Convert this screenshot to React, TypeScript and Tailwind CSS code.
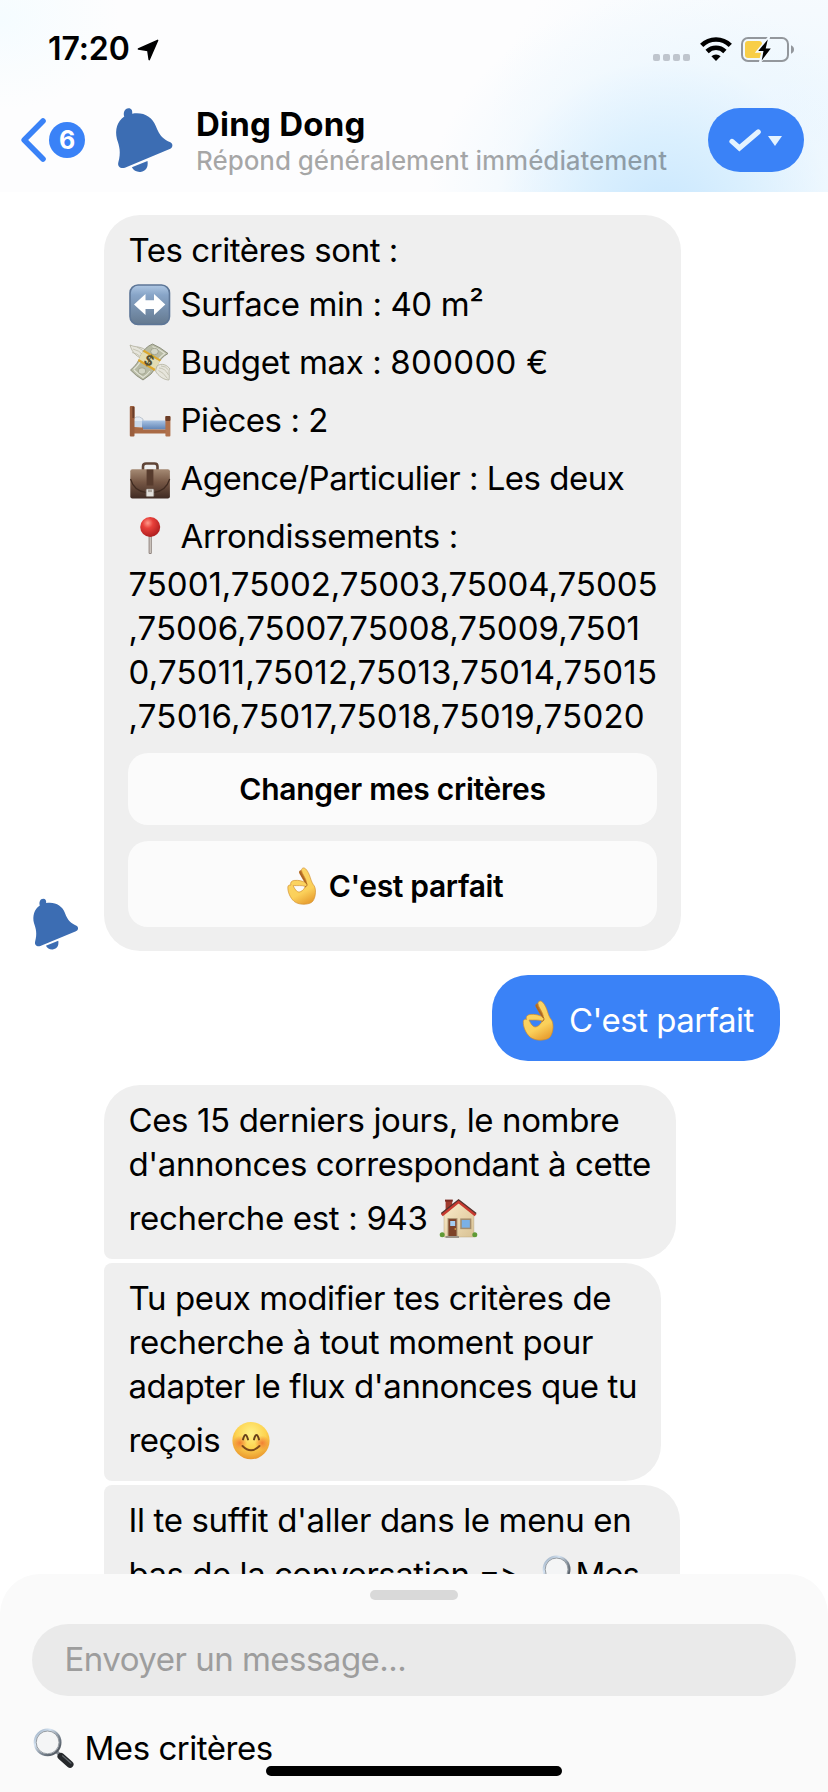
import type { ReactNode } from "react";

function Bell({ className }: { className: string }) {
  return (
    <svg viewBox="340 320 185 205" className={className} fill="#3c6db3">
      <path d="M373 352C369 341 374 327 386 327C395 327 398 334 397 343C430 337 458 352 468 380C480 412 492 420 512 429C521 434 520 446 510 450L375 506C362 510 352 502 355 490C364 460 358 440 351 420C344 392 352 366 373 352Z" />
      <path d="M396 505L443 486C446 505 438 517 422 519C410 520 401 514 396 505Z" />
    </svg>
  );
}

function ArrowsEmoji() {
  return (
    <svg viewBox="0 0 42 42" className="size-[42px]">
      <defs>
        <linearGradient id="ar" x1="0" y1="0" x2="0" y2="1">
          <stop offset="0" stopColor="#afc8e4" />
          <stop offset=".25" stopColor="#88a5c8" />
          <stop offset="1" stopColor="#64798f" />
        </linearGradient>
      </defs>
      <rect x="1" y="1" width="39.5" height="39.5" rx="8" fill="url(#ar)" stroke="#5d7697" strokeWidth="1.6" />
      <path d="M5 20.5L16.5 10V16.2H25V10L36.3 20.5L25 31V25H16.5V31Z" fill="#fff" />
    </svg>
  );
}

function MoneyEmoji() {
  return (
    <svg viewBox="0 0 42 42" className="size-[42px]">
      <path d="M15 17C9 16 3 11 1 3C5 5 9 4.500 13 6C17 7.500 19 10 19 13Z" fill="#e6e5dc" stroke="#a9a893" strokeWidth=".7" />
      <path d="M4 7Q10 8 15 14M3 10.500Q8 11 13 16M8 5Q14 7 17 13" fill="none" stroke="#b7b6a2" strokeWidth=".7" />
      <path d="M1.500 28Q9 22 12 13Q16 5 23.500 2Q31 5 39 11.500Q31 16 28 24Q23 33 14 38Q7 34 1.500 28Z" fill="#b7baa4" stroke="#7f826e" strokeWidth=".8" />
      <path d="M4.500 27.500Q11 22 14 14M23.500 4.500Q30 7 35.800 11.500Q29 16 26 23M5 28Q9 32 14 35.500Q18 33 21 29" fill="none" stroke="#e2e3d6" strokeWidth="1.100" />
      <ellipse cx="25.500" cy="9.500" rx="3.800" ry="3.200" fill="#d3d5c5" stroke="#8b8f78" strokeWidth=".6" />
      <ellipse cx="13" cy="29" rx="3.800" ry="3.200" fill="#d3d5c5" stroke="#8b8f78" strokeWidth=".6" />
      <path d="M13.500 9.500L31 19.500L26.500 27.500L9.500 17.500Z" fill="#e3dcb2" />
      <path d="M14.500 8.600L31.500 18.600M9.300 18L26 28" stroke="#dfa92c" strokeWidth="2.200" />
      <text x="20" y="23.500" textAnchor="middle" fontSize="14" fontWeight="700" fill="#57502e" transform="rotate(25 20 18.500)">$</text>
      <path d="M28 24C33 20.500 38 23 41 27C39 29 41 32 40 38C35 38 29 34 26.500 29Z" fill="#e6e5dc" stroke="#a9a893" strokeWidth=".7" />
      <path d="M30 26Q36 26 39.500 33M29.500 28.500Q34 30 38.500 36.500M32 24Q37 24 39.500 28" fill="none" stroke="#b7b6a2" strokeWidth=".7" />
    </svg>
  );
}

function OkHandEmoji({ className }: { className: string }) {
  return (
    <svg viewBox="0 0 42 42" className={`shrink-0 ${className}`}>
      <defs>
        <linearGradient id="ok" x1=".2" y1="0" x2=".6" y2="1">
          <stop offset="0" stopColor="#fbd66a" />
          <stop offset=".7" stopColor="#fbd05a" />
          <stop offset="1" stopColor="#e9a233" />
        </linearGradient>
      </defs>
      <path d="M21 3.500C19 3 17.500 5 19 7.500L25 18L30 17L25 6Z" fill="#b9702a" />
      <path
        fillRule="evenodd"
        d="M23.300 1C26 1 29 6.500 30.500 11.500C31.600 15.200 32.800 18 34.800 20.500C37.300 25 36 35 32 38C27 41.200 17.500 40.800 13 37C9 33.500 6 27 6.300 21.500C6.500 19.600 8 19 9.600 19.500C8.600 17 10 14.900 13 14.500C18 13.900 22.500 15 26.500 17.500C26.500 12.500 21 7 21 3.500C21 2 22 1 23.300 1ZM12 20C14.500 25.500 17 28 20 26.500C22.500 25.500 24.500 23 25 20.800C21 19.500 16.500 20.300 12 20Z"
        fill="url(#ok)"
        stroke="#d08d2c"
        strokeWidth=".7"
      />
      <path d="M19.300 5.500C20 9 24 12.500 26 17.500M26.500 17.500C27.500 19 27 21 25 21.500" fill="none" stroke="#a8641f" strokeWidth="1" strokeLinecap="round" />
    </svg>
  );
}

function BedEmoji() {
  return (
    <svg viewBox="0 0 42 42" className="size-[42px]">
      <defs>
        <linearGradient id="bd" x1="0" y1="0" x2="0" y2="1">
          <stop offset="0" stopColor="#a9c3e3" />
          <stop offset="1" stopColor="#5f83b5" />
        </linearGradient>
      </defs>
      <path d="M4 20L7 17Q11 16 14 19L14 22L4 23Z" fill="#e4ebf3" stroke="#a3adb9" strokeWidth=".6" />
      <rect x="4" y="21" width="10" height="6" fill="#c9d8ea" />
      <rect x="13" y="20.5" width="24" height="9" fill="url(#bd)" />
      <path d="M5 27L14 27.5V29.5H37V33.5H5Z" fill="#a96a45" />
      <rect x=".8" y="6" width="4.7" height="30.5" rx="1" fill="#9b5e3d" />
      <rect x="3.4" y="7" width="2" height="11" fill="#6b3d28" />
      <rect x="36.4" y="16" width="5" height="20.5" rx="1" fill="#b0714c" />
      <rect x="36.4" y="16" width="5" height="5" rx="1" fill="#6b3d28" />
    </svg>
  );
}

function BriefcaseEmoji() {
  return (
    <svg viewBox="0 0 42 42" className="size-[42px]">
      <defs>
        <linearGradient id="bc" x1="0" y1="0" x2="0" y2="1">
          <stop offset="0" stopColor="#a58a74" />
          <stop offset=".45" stopColor="#755644" />
          <stop offset="1" stopColor="#3f2a23" />
        </linearGradient>
      </defs>
      <path d="M14 12V8.5Q14 5.5 17 5.5H25.5Q28.5 5.5 28.5 8.5V12" fill="none" stroke="#5f4436" strokeWidth="2.6" />
      <rect x="1.3" y="11.2" width="39.6" height="29.2" rx="2" fill="url(#bc)" />
      <path d="M1.5 21Q5 33 17 34.5H25Q37 33 40.7 21" fill="none" stroke="#3f2a20" strokeWidth="1.2" />
      <rect x="17.6" y="11.5" width="6.8" height="16" fill="#573b2d" />
      <rect x="17.2" y="31" width="7.6" height="7.6" rx="1" fill="#e3e0dc" stroke="#8b847e" strokeWidth=".6" />
      <rect x="19" y="31.5" width="4" height="2.6" fill="#aca59e" />
    </svg>
  );
}

function PinEmoji() {
  return (
    <svg viewBox="0 0 42 42" className="size-[42px]">
      <defs>
        <radialGradient id="pn" cx=".38" cy=".3" r=".75">
          <stop offset="0" stopColor="#ff9a8b" />
          <stop offset=".35" stopColor="#e8403a" />
          <stop offset="1" stopColor="#a91a1c" />
        </radialGradient>
      </defs>
      <rect x="19.6" y="19" width="3.2" height="19" rx="1.2" fill="#8f837d" />
      <rect x="20.6" y="20" width="1.2" height="17" fill="#d8d0ca" />
      <circle cx="21.2" cy="11" r="10" fill="url(#pn)" />
    </svg>
  );
}

function HouseEmoji() {
  return (
    <svg viewBox="0 0 42 42" className="size-[42px]">
      <defs>
        <linearGradient id="hs" x1="0" y1="0" x2="1" y2="1">
          <stop offset="0" stopColor="#fbeccb" />
          <stop offset="1" stopColor="#d9c294" />
        </linearGradient>
      </defs>
      <rect x="8.6" y="2.2" width="6.6" height="13" fill="#a03a2e" />
      <rect x="8" y="1.6" width="7.8" height="2" fill="#7c2a22" />
      <path d="M7 17L21.5 4L36.8 17V39H7Z" fill="url(#hs)" stroke="#b9a57c" strokeWidth=".5" />
      <path d="M4.8 17.2L21.6 3.6L38.6 17.2" fill="none" stroke="#c8392f" strokeWidth="3" />
      <path d="M4.2 15.6L21.6 1.8L39.2 15.6" fill="none" stroke="#54312c" strokeWidth="1.3" />
      <rect x="11" y="20.6" width="9" height="18" fill="#7d4229" stroke="#b19a78" strokeWidth="1" />
      <rect x="13.2" y="23" width="5" height="5" fill="#a5cdf0" />
      <circle cx="18.3" cy="31" r=".8" fill="#f5c94c" />
      <rect x="24" y="21.2" width="9.6" height="9.2" fill="#7ab0e6" stroke="#a38c6c" strokeWidth="1.5" />
      <rect x="8.5" y="38" width="13.5" height="2" fill="#9b948a" />
      <circle cx="5.2" cy="36.8" r="2.5" fill="#5f9a35" />
      <circle cx="37.8" cy="36.8" r="2.5" fill="#5f9a35" />
    </svg>
  );
}

function SmileEmoji() {
  return (
    <svg viewBox="0 0 42 42" className="size-[42px]">
      <defs>
        <radialGradient id="sm" cx=".5" cy=".3" r=".72">
          <stop offset="0" stopColor="#fff287" />
          <stop offset=".55" stopColor="#fdd350" />
          <stop offset="1" stopColor="#e8922a" />
        </radialGradient>
        <radialGradient id="ck">
          <stop offset="0" stopColor="#f0702e" stopOpacity=".85" />
          <stop offset="1" stopColor="#f0702e" stopOpacity="0" />
        </radialGradient>
      </defs>
      <circle cx="21" cy="20.7" r="18.6" fill="url(#sm)" />
      <circle cx="9.8" cy="23" r="7.4" fill="url(#ck)" />
      <circle cx="32.2" cy="23" r="7.4" fill="url(#ck)" />
      <path d="M13 19.4Q15.5 10.5 18 19.4M24 19.4Q26.500 10.5 29 19.4" fill="none" stroke="#68401a" strokeWidth="2" strokeLinecap="round" />
      <path d="M12.500 26Q21 34.5 29.500 26" fill="none" stroke="#7b481a" strokeWidth="1.9" strokeLinecap="round" />
    </svg>
  );
}

function LoupeEmoji() {
  return (
    <svg viewBox="0 0 42 42" className="size-[42px] shrink-0">
      <defs>
        <linearGradient id="lr" x1="0" y1="0" x2="1" y2="1">
          <stop offset="0" stopColor="#8fa3b8" />
          <stop offset=".3" stopColor="#d5e3f2" />
          <stop offset=".6" stopColor="#7d8894" />
          <stop offset="1" stopColor="#3e444b" />
        </linearGradient>
      </defs>
      <path d="M24 25L28 29" stroke="#878d94" strokeWidth="3.4" />
      <path d="M28 29.4L37 37.4" stroke="#25282b" strokeWidth="7" strokeLinecap="round" />
      <path d="M29.5 28.8L38 36.2" stroke="#62686e" strokeWidth="1.2" strokeLinecap="round" />
      <circle cx="14.6" cy="15.4" r="12.8" fill="#f4f5f6" stroke="url(#lr)" strokeWidth="2.2" />
      <circle cx="14.6" cy="15.4" r="11.4" fill="none" stroke="#6a727b" strokeWidth=".7" />
    </svg>
  );
}

function EmojiRow({ icon, children, tracking }: { icon: ReactNode; children: ReactNode; tracking: string }) {
  return (
    <div className="flex h-[58px]">
      <div className="h-[42px] w-[42px] shrink-0 pt-3">{icon}</div>
      <div className={`pt-2.5 pl-[10px] whitespace-pre ${tracking}`}>{children}</div>
    </div>
  );
}

function Line({ children, tracking }: { children: string; tracking: string }) {
  return <div className={`h-11 whitespace-pre ${tracking}`}>{children}</div>;
}

function Header() {
  return (
    <header className="h-[192px] w-full shrink-0 bg-[#fdfdfe] bg-[radial-gradient(ellipse_240px_220px_at_665px_215px,#c9e7fe_0%,rgba(212,237,254,0.8)_35%,rgba(234,246,255,0.45)_70%,rgba(248,252,255,0)_100%),radial-gradient(ellipse_300px_220px_at_790px_120px,rgba(226,243,255,0.6)_0%,rgba(240,249,255,0)_100%),radial-gradient(ellipse_120px_90px_at_0px_20px,#f5fcff_0%,rgba(253,253,254,0)_100%)]">
      <div className="flex h-[88px] justify-between">
        <div className="flex pt-[29px] pl-[48px]">
          <span className="text-[32px] leading-10 font-semibold tracking-[-0.08px]">17:20</span>
          <svg viewBox="0 0 22 22" className="mt-[10px] ml-[7px] size-[22px]">
            <path d="M20.6 1.4L12.2 20.6L10.8 11.4L1.4 10Z" stroke="#000" strokeWidth="1.5" strokeLinejoin="round" />
          </svg>
        </div>
        <div className="flex pt-[37px] pr-[33px]">
          <svg viewBox="0 0 37 7" className="mt-[17px] h-[7px] w-[37px]" fill="#bfc5cd">
            <rect width="7" height="7" rx="2" />
            <rect x="10" width="7" height="7" rx="2" />
            <rect x="20" width="7" height="7" rx="2" />
            <rect x="30" width="7" height="7" rx="2" />
          </svg>
          <svg viewBox="0 0 32 24" className="ml-[10px] h-6 w-8" fill="none" stroke="#000" strokeWidth="4.6">
            <path d="M1.7 8.4A20.3 20.3 0 0 1 30.3 8.4" />
            <path d="M7.1 14.5A12.6 12.6 0 0 1 24.9 14.5" />
            <path d="M16 24L11.4 19.3A6.6 6.6 0 0 1 20.6 19.3Z" fill="#000" stroke="none" />
          </svg>
          <svg viewBox="0 0 54 25" className="ml-[9px] h-[25px] w-[54px]">
            <rect x="1" y="1" width="46" height="23" rx="6" fill="none" stroke="#93979c" strokeWidth="2" />
            <rect x="4" y="4" width="17" height="17" rx="3" fill="#f8ce47" />
            <path d="M50 8.3Q53 9.5 53 12.5T50 16.7Z" fill="#93979c" />
            <path d="M28.5 -1L15.5 15H21L18.6 26L31.4 10.7H25.6Z" fill="#f3faff" stroke="#f3faff" strokeWidth="1.6" />
            <path d="M26.8 2.4L17.2 14H22.5L20.7 23.4L29.8 11.6H24.7Z" fill="#000" />
          </svg>
        </div>
      </div>
      <div className="flex h-[104px] items-center">
        <svg viewBox="0 0 28 48" className="ml-[20px] h-12 w-7" fill="none" stroke="#3a82f7" strokeWidth="5.6" strokeLinecap="round" strokeLinejoin="round">
          <path d="M23 5L4.2 24L23 43" />
        </svg>
        <div className="ml-[1px] flex size-9 items-center justify-center rounded-full bg-[#3a82f7] text-[25px] leading-9 font-bold text-white">6</div>
        <Bell className="ml-[28px] h-[68px] w-[62px]" />
        <div className="ml-[21px] flex-1">
          <div className="text-[33px] leading-10 font-bold tracking-[0.24px]">Ding Dong</div>
          <div className="relative top-px text-[26px] leading-8 font-medium tracking-[-0.06px] whitespace-pre text-black/34">Répond généralement immédiatement</div>
        </div>
        <div className="mr-6 flex h-16 w-24 items-center rounded-[32px] bg-[#3a82f7]">
          <svg viewBox="0 0 96 64" className="h-16 w-24">
            <path d="M24 33.4L31.4 40L50.2 24" fill="none" stroke="#e4f3ff" strokeWidth="5.2" strokeLinecap="round" strokeLinejoin="miter" />
            <path d="M60 28H74L67 38Z" fill="#e4f3ff" />
          </svg>
        </div>
      </div>
    </header>
  );
}

export default function App() {
  return (
    <div className="flex h-[1792px] w-[828px] flex-col overflow-hidden bg-white font-['Inter','Liberation_Sans',sans-serif] text-[33px] leading-11 text-black">
      <Header />

      <main className="h-[1422px] shrink-0 overflow-hidden pt-[23px]">
        <div className="flex items-end">
          <Bell className="ml-[31px] h-[54px] w-[49px]" />
          <div className="ml-6 h-[736px] w-[577px] rounded-[36px] bg-[#efefef] pt-[13px]">
            <div className="pl-[24.5px]">
              <Line tracking="tracking-[-0.47px]">Tes critères sont :</Line>
              <EmojiRow icon={<ArrowsEmoji />} tracking="tracking-[-0.41px]">Surface min : 40 m²</EmojiRow>
              <EmojiRow icon={<MoneyEmoji />} tracking="tracking-[-0.35px]">
                Budget max : <span className="tracking-[0.3px]">800000 €</span>
              </EmojiRow>
              <EmojiRow icon={<BedEmoji />} tracking="tracking-[-0.46px]">Pièces : 2</EmojiRow>
              <EmojiRow icon={<BriefcaseEmoji />} tracking="tracking-[-0.52px]">Agence/Particulier : Les deux</EmojiRow>
              <EmojiRow icon={<PinEmoji />} tracking="tracking-[-0.35px]">Arrondissements :</EmojiRow>
              <Line tracking="tracking-[-0.03px]">75001,75002,75003,75004,75005</Line>
              <Line tracking="tracking-[0.03px]">,75006,75007,75008,75009,7501</Line>
              <Line tracking="tracking-[0.22px]">0,75011,75012,75013,75014,75015</Line>
              <Line tracking="tracking-[0.24px]">,75016,75017,75018,75019,75020</Line>
            </div>
            <div className="mt-[15px] flex flex-col gap-4 px-6 text-[30px] leading-9 font-semibold">
              <button className="flex h-[72px] items-center justify-center rounded-[20px] bg-[#fbfbfb] pb-[1px] tracking-[-0.28px]">Changer mes critères</button>
              <button className="flex h-[86px] items-center justify-center rounded-[20px] bg-[#fbfbfb] pt-[4px] tracking-[-0.36px]">
                <OkHandEmoji className="h-[39px] w-[39px]" />
                <span className="ml-[8px]">C'est parfait</span>
              </button>
            </div>
          </div>
        </div>

        <div className="mt-6 mr-12 ml-auto h-[86px] w-[288px] rounded-[36px] bg-[#3a82f7] pt-[13px] pl-[25px] text-white">
          <EmojiRow icon={<OkHandEmoji className="size-[42px]" />} tracking="tracking-[-0.5px]">C'est parfait</EmojiRow>
        </div>

        <div className="mt-6 ml-[104px] flex flex-col gap-1">
          <div className="h-[174px] w-[572px] rounded-[36px] rounded-bl-lg bg-[#efefef] pt-[13px] pl-[24.5px]">
            <Line tracking="tracking-[-0.38px]">Ces 15 derniers jours, le nombre</Line>
            <Line tracking="tracking-[-0.4px]">d'annonces correspondant à cette</Line>
            <div className="flex h-[58px]">
              <div className="w-[308px] pt-2.5 tracking-[-0.32px] whitespace-pre">recherche est : 943</div>
              <div className="pt-3"><HouseEmoji /></div>
            </div>
          </div>
          <div className="h-[218px] w-[557px] rounded-[36px] rounded-l-lg bg-[#efefef] pt-[13px] pl-[24.5px]">
            <Line tracking="tracking-[-0.39px]">Tu peux modifier tes critères de</Line>
            <Line tracking="tracking-[-0.32px]">recherche à tout moment pour</Line>
            <Line tracking="tracking-[-0.43px]">adapter le flux d'annonces que tu</Line>
            <div className="flex h-[58px]">
              <div className="w-[101px] pt-2.5 tracking-[-0.6px] whitespace-pre">reçois</div>
              <div className="pt-3"><SmileEmoji /></div>
            </div>
          </div>
          <div className="h-[174px] w-[576px] rounded-[36px] rounded-l-lg bg-[#efefef] pt-[13px] pl-[24.5px]">
            <Line tracking="tracking-[-0.35px]">Il te suffit d'aller dans le menu en</Line>
            <div className="flex h-[58px]">
              <div className="w-[350px] pt-2.5 tracking-[-0.48px] whitespace-pre">bas de la conversation</div>
              <div className="w-[63px] pt-2.5 tracking-[-1px] [font-feature-settings:'calt'_0]">=&gt;</div>
              <div className="pt-3"><LoupeEmoji /></div>
              <div className="-ml-[8px] pt-2.5 tracking-[-1px]">Mes</div>
            </div>
          </div>
        </div>
      </main>

      <footer className="relative -mt-10 flex h-[218px] shrink-0 flex-col rounded-t-[40px] bg-[#fafafa] px-8 pt-4">
        <div className="h-[10px] w-[88px] self-center rounded-full bg-[#d9d9d9]" />
        <div className="mt-6 h-[72px] rounded-full bg-[#eaeaea] pt-[13px] pl-[32.5px] tracking-[-0.51px] text-[#9d9d9d]">Envoyer un message...</div>
        <div className="mt-[30px] flex h-11">
          <div className="ml-[1px] pt-[1px]"><LoupeEmoji /></div>
          <div className="ml-[9.5px] tracking-[-0.46px] whitespace-pre">Mes critères</div>
        </div>
        <div className="-mt-1 h-[10px] w-[296px] shrink-0 self-center rounded-full bg-black" />
      </footer>
    </div>
  );
}
